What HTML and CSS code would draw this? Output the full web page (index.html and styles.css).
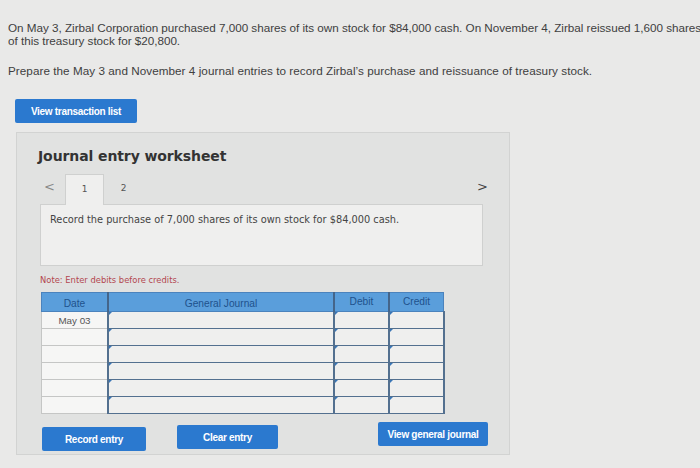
FILE: index.html
```html
<!DOCTYPE html>
<html>
<head>
<meta charset="utf-8">
<link rel="stylesheet" href="styles.css">
</head>
<body>
<div class="page">
  <div class="clip">
    <p class="q">On May 3, Zirbal Corporation purchased 7,000 shares of its own stock for $84,000 cash. On November 4, Zirbal reissued 1,600 shares<br>of this treasury stock for $20,800.</p>
  </div>
  <p class="q q2">Prepare the May 3 and November 4 journal entries to record Zirbal’s purchase and reissuance of treasury stock.</p>
  <button class="btn btn-list">View transaction list</button>

  <section class="panel">
    <h2 class="title">Journal entry worksheet</h2>
    <div class="tabs">
      <span class="arrow">&lt;</span>
      <span class="tab active">1</span>
      <span class="tab">2</span>
      <span class="spacer"></span>
      <span class="arrow arrow-r">&gt;</span>
    </div>
    <div class="desc">Record the purchase of 7,000 shares of its own stock for $84,000 cash.</div>
    <p class="note">Note: Enter debits before credits.</p>

    <table class="jt">
      <thead>
        <tr><th class="c-date">Date</th><th class="c-gj">General Journal</th><th class="c-num">Debit</th><th class="c-num">Credit</th></tr>
      </thead>
      <tbody>
        <tr><td class="date first">May 03</td><td class="in"></td><td class="in"></td><td class="in"></td></tr>
        <tr><td class="date"></td><td class="in"></td><td class="in"></td><td class="in"></td></tr>
        <tr><td class="date"></td><td class="in"></td><td class="in"></td><td class="in"></td></tr>
        <tr><td class="date"></td><td class="in"></td><td class="in"></td><td class="in"></td></tr>
        <tr><td class="date"></td><td class="in"></td><td class="in"></td><td class="in"></td></tr>
        <tr><td class="date"></td><td class="in"></td><td class="in"></td><td class="in"></td></tr>
      </tbody>
    </table>

    <div class="actions">
      <button class="btn btn-record">Record entry</button>
      <button class="btn btn-clear">Clear entry</button>
      <span class="spacer"></span>
      <button class="btn btn-view">View general journal</button>
    </div>
  </section>
</div>
</body>
</html>
```
FILE: styles.css
```css
html, body {
  margin: 0;
  padding: 0;
  background: #e9e9e8;
  overflow: hidden;
}
.page {
  width: 700px;
  box-sizing: border-box;
  padding: 21px 0 0 8px;
  font-family: "Liberation Sans", Arial, sans-serif;
  color: #404040;
}
.clip {
  width: 692px;
  overflow: hidden;
}
.q {
  margin: 0;
  font-size: 11.7px;
  line-height: 13px;
  white-space: nowrap;
  letter-spacing: -0.02px;
}
.q2 {
  margin-top: 17px;
  letter-spacing: 0.05px;
}
.btn {
  display: block;
  border: none;
  background: #2b79cf;
  color: #fff;
  font-family: "Liberation Sans", Arial, sans-serif;
  font-weight: bold;
  font-size: 10px;
  letter-spacing: -0.3px;
  border-radius: 2px;
  padding: 0;
  height: 24px;
}
.btn-list {
  margin: 22px 0 0 7px;
  width: 122px;
  height: 24px;
}
.panel {
  margin: 9px 0 0 8px;
  width: 494px;
  height: 323px;
  box-sizing: border-box;
  background: #e1e2e1;
  border: 1px solid #d2d3d2;
  padding: 0 0 0 23px;
}
.title {
  margin: 14px 0 0 -2px;
  font-family: "DejaVu Sans", Verdana, sans-serif;
  font-size: 14px;
  letter-spacing: -0.1px;
  font-weight: bold;
  color: #333;
  line-height: 18px;
}
.tabs {
  display: flex;
  align-items: flex-end;
  width: 448px;
  height: 30px;
  margin-top: 9px;
  font-family: "DejaVu Sans", Verdana, sans-serif;
  font-size: 9px;
  color: #555;
}
.arrow {
  font-size: 13px;
  line-height: 14px;
  color: #888;
  width: 25px;
  align-self: center;
  padding: 0 0 4px 4px;
  box-sizing: border-box;
}
.arrow-r {
  color: #444;
  width: auto;
  padding: 0 0 4px 0;
}
.tab {
  width: 39px;
  height: 30px;
  display: flex;
  align-items: center;
  justify-content: center;
  box-sizing: border-box;
  padding-bottom: 2px;
}
.tab.active {
  background: #efefee;
  border: 1px solid #cfd0cf;
  border-bottom: none;
  height: 31px;
  margin-bottom: -1px;
  position: relative;
  z-index: 1;
}
.spacer { flex: 1; }
.desc {
  width: 443px;
  height: 62px;
  box-sizing: border-box;
  background: #efefee;
  border: 1px solid #cfd0cf;
  padding: 9px 0 0 9px;
  font-family: "DejaVu Sans", Verdana, sans-serif;
  font-size: 9.8px;
  color: #444;
}
.note {
  margin: 9px 0 0 0;
  font-family: "DejaVu Sans", Verdana, sans-serif;
  font-size: 8.4px;
  color: #b3464f;
  line-height: 10px;
}
.jt {
  margin: 7px 0 0 1px;
  border-collapse: collapse;
  font-family: "Liberation Sans", Arial, sans-serif;
  font-size: 10.2px;
}
.jt th {
  background: #5a9edb;
  color: #1f528c;
  font-weight: normal;
  height: 18px;
  padding: 0;
  line-height: 12px;
  vertical-align: middle;
  border-left: 2px solid #44658a;
  border-top: 1px solid #4b83bd;
  border-bottom: 1px solid #4b83bd;
}
.jt th:first-child { border-left: 1px solid #4b83bd; }
.jt th:last-child { border-right: 1px solid #4b83bd; }
.jt th.c-date, .jt th.c-gj {
  height: 14px;
  padding-top: 4px;
}
.c-date { width: 65px; }
.c-gj { width: 224px; }
.c-num { width: 53px; }
.jt td {
  height: 16px;
  padding: 0;
}
.jt td.date {
  background: #f6f6f5;
  border: 1px solid #c5c6c5;
  text-align: center;
  color: #555;
  font-size: 9.8px;
  line-height: 12px;
  vertical-align: middle;
}
.jt td.date.first {
  vertical-align: bottom;
  padding-bottom: 1px;
  height: 15px;
}
.jt td.in {
  background: #efefee;
  border: 2px solid #53708f;
  border-top-width: 1px;
  border-bottom-width: 1px;
  position: relative;
}
.jt td.in::before {
  content: "";
  position: absolute;
  left: 0;
  top: 0;
  width: 0;
  height: 0;
  border-top: 3px solid #3a76b6;
  border-right: 3px solid transparent;
}
.actions {
  display: flex;
  align-items: flex-start;
  width: 448px;
  margin-top: 10px;
}
.btn-record {
  width: 104px;
  margin: 3px 0 0 2px;
}
.btn-clear {
  width: 101px;
  margin: 1px 0 0 31px;
}
.btn-view {
  width: 110px;
  margin: -2px 0 0 0;
}
```
